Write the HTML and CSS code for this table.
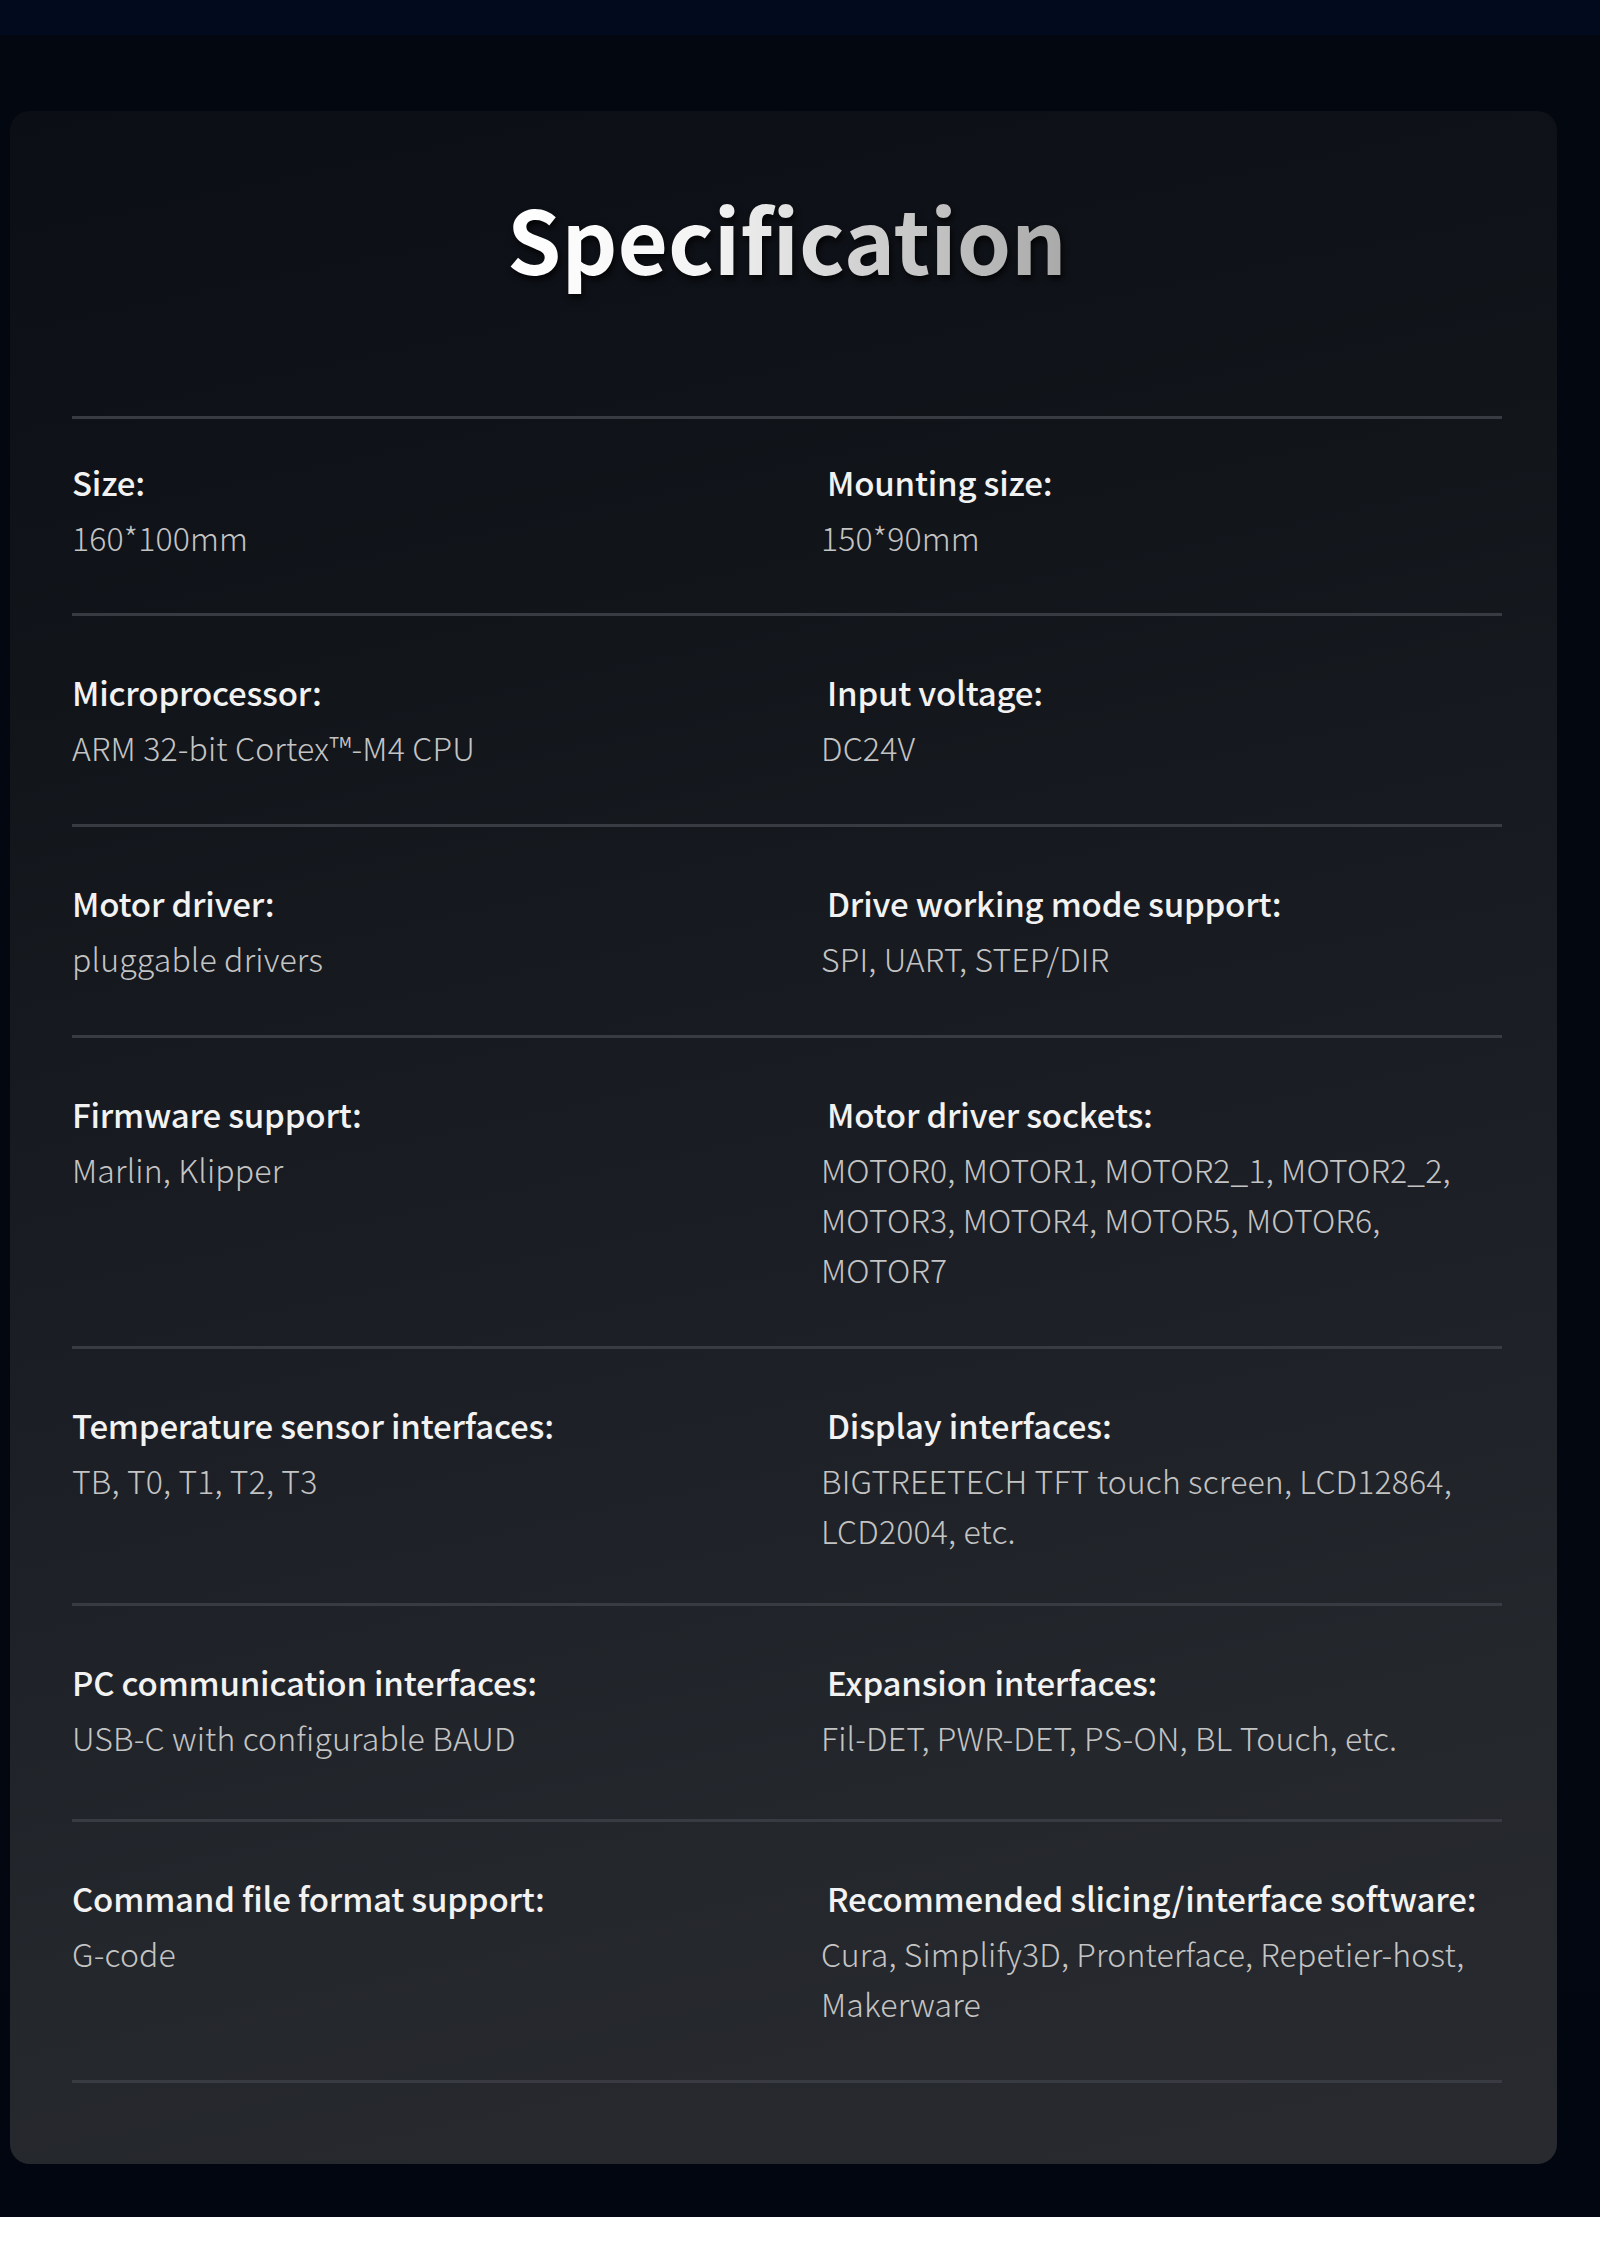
FILE: index.html
```html
<!DOCTYPE html>
<html lang="en">
<head>
<meta charset="utf-8">
<title>Specification</title>
<link rel="stylesheet" href="styles.css">
</head>
<body>
<div class="topband"></div>
<main class="stage">
  <section class="card">
    <h1 class="title">Specification</h1>
    <div class="specs">
      <div class="row row-first">
        <div class="cell"><div class="label">Size:</div><div class="value">160*100mm</div></div>
        <div class="cell cell-right"><div class="label">Mounting size:</div><div class="value">150*90mm</div></div>
      </div>
      <div class="row">
        <div class="cell"><div class="label">Microprocessor:</div><div class="value">ARM 32-bit Cortex™-M4 CPU</div></div>
        <div class="cell cell-right"><div class="label">Input voltage:</div><div class="value">DC24V</div></div>
      </div>
      <div class="row">
        <div class="cell"><div class="label">Motor driver:</div><div class="value">pluggable drivers</div></div>
        <div class="cell cell-right"><div class="label">Drive working mode support:</div><div class="value">SPI, UART, STEP/DIR</div></div>
      </div>
      <div class="row">
        <div class="cell"><div class="label">Firmware support:</div><div class="value">Marlin, Klipper</div></div>
        <div class="cell cell-right"><div class="label">Motor driver sockets:</div><div class="value">MOTOR0, MOTOR1, MOTOR2_1, MOTOR2_2,<br>MOTOR3, MOTOR4, MOTOR5, MOTOR6,<br>MOTOR7</div></div>
      </div>
      <div class="row row-short">
        <div class="cell"><div class="label">Temperature sensor interfaces:</div><div class="value">TB, T0, T1, T2, T3</div></div>
        <div class="cell cell-right"><div class="label">Display interfaces:</div><div class="value">BIGTREETECH TFT touch screen, LCD12864,<br>LCD2004, etc.</div></div>
      </div>
      <div class="row row-tall">
        <div class="cell"><div class="label">PC communication interfaces:</div><div class="value">USB-C with configurable BAUD</div></div>
        <div class="cell cell-right"><div class="label">Expansion interfaces:</div><div class="value">Fil-DET, PWR-DET, PS-ON, BL Touch, etc.</div></div>
      </div>
      <div class="row row-last">
        <div class="cell"><div class="label">Command file format support:</div><div class="value">G-code</div></div>
        <div class="cell cell-right"><div class="label">Recommended slicing/interface software:</div><div class="value">Cura, Simplify3D, Pronterface, Repetier-host,<br>Makerware</div></div>
      </div>
    </div>
  </section>
</main>
<div class="footer-gap"></div>
</body>
</html>
```

FILE: styles.css
```css
* { box-sizing: border-box; }

html, body {
  margin: 0;
  padding: 0;
}

body {
  background: #ffffff;
  font-family: "Noto Sans CJK SC", "Noto Sans", sans-serif;
  width: 1600px;
}

.topband {
  height: 35px;
  background: #020b1d;
}

.stage {
  background: linear-gradient(180deg, #03070f 0%, #03070f 60%, #020610 100%);
  padding: 76px 43px 53px 10px;
}

.card {
  border-radius: 20px;
  background: linear-gradient(168deg, #0b0e15 0%, #111419 25%, #1b1e24 55%, #24272c 80%, #282a2f 100%);
  padding: 0 55px 84px 62px;
  height: 2053px;
}

.title {
  margin: 0 auto;
  padding-top: 66px;
  height: 305px;
  width: fit-content;
  text-align: center;
  font-size: 87px;
  line-height: 120px;
  font-weight: 700;
  background: linear-gradient(90deg, #ffffff 0%, #f4f4f4 35%, #c9c9c9 70%, #a9a9a9 100%);
  -webkit-background-clip: text;
  background-clip: text;
  color: transparent;
  filter: drop-shadow(2px 4px 3px rgba(0, 0, 0, 0.75));
}

.specs {
  border-bottom: 3px solid #383b42;
}

.row {
  display: grid;
  grid-template-columns: 749px 1fr;
  border-top: 3px solid #383b42;
  padding: 56px 0 52px;
}

.row-first { padding-top: 43px; padding-bottom: 51px; }
.row-short { padding-bottom: 48px; }
.row-tall { padding-bottom: 57px; }

.label {
  font-size: 33px;
  line-height: 40px;
  font-weight: 500;
  color: #f2f2f2;
  margin-bottom: 10px;
  letter-spacing: -0.2px;
}

.cell-right .label { padding-left: 6px; }

.value {
  font-size: 32px;
  line-height: 50px;
  font-weight: 300;
  color: #c4c4c4;
  letter-spacing: 0.15px;
}

.footer-gap {
  height: 46px;
  background: #ffffff;
}
```
